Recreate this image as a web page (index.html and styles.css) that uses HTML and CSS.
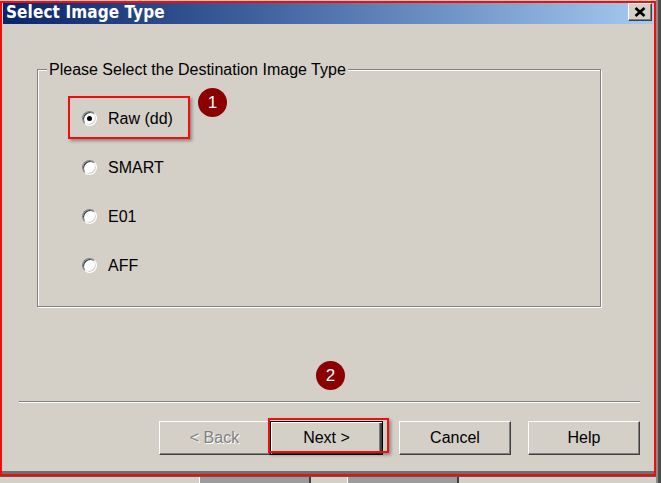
FILE: index.html
```html
<!DOCTYPE html>
<html>
<head>
<meta charset="utf-8">
<link rel="stylesheet" href="styles.css">
</head>
<body>
<div class="screen">
  <div class="left">
    <div class="dialog">
      <div class="titlebar">
        <span class="title">Select Image Type</span>
        <div class="close">
          <svg width="12" height="10" viewBox="0 0 12 10"><path d="M1.5 1 L10.5 9 M10.5 1 L1.5 9" stroke="#000" stroke-width="2.6" fill="none"/></svg>
        </div>
      </div>
      <div class="group">
        <span class="legend">Please Select the Destination Image Type</span>
        <div class="options">
          <label class="opt"><span class="radio checked"></span><span>Raw (dd)</span></label>
          <label class="opt"><span class="radio"></span><span>SMART</span></label>
          <label class="opt"><span class="radio"></span><span>E01</span></label>
          <label class="opt"><span class="radio"></span><span>AFF</span></label>
        </div>
      </div>
      <div class="sep"></div>
      <div class="buttons">
        <div class="btn back disabled">&lt; Back</div>
        <div class="btn next default">Next &gt;</div>
        <div class="btn cancel">Cancel</div>
        <div class="btn help">Help</div>
      </div>
      <div class="hl hl-raw"></div>
      <div class="hl hl-next"></div>
      <div class="badge badge-1">1</div>
      <div class="badge badge-2">2</div>
    </div>
    <div class="under">
      <div class="ub"></div>
      <div class="ub ub2"></div>
    </div>
  </div>
  <div class="edge"></div>
</div>
</body>
</html>
```
FILE: styles.css
```css
* { box-sizing: border-box; }
html, body { margin: 0; padding: 0; }
body {
  font-family: "Liberation Sans", Arial, sans-serif;
  font-size: 16px;
  color: #000;
  background: #d4d0c8;
}
.screen {
  width: 661px;
  height: 483px;
  display: flex;
  background: #d4d0c8;
  overflow: hidden;
}
.left {
  width: 656px;
  display: flex;
  flex-direction: column;
  padding-top: 1px;
}
.dialog {
  position: relative;
  height: 475px;
  border: 2px solid #f20c0c;
  background: #d4d0c8;
  box-shadow: inset 0 -3px 0 #6f6f6f;
  display: flex;
  flex-direction: column;
}
.titlebar {
  height: 21px;
  margin: 0 1px 0 1px;
  display: flex;
  align-items: flex-start;
  justify-content: space-between;
  background: linear-gradient(to right, #0a246a 0%, #3a5a98 35%, #7396c8 70%, #a6caf0 100%);
}
.title {
  font-family: "DejaVu Sans Condensed", "DejaVu Sans", sans-serif;
  font-stretch: condensed;
  font-weight: bold;
  font-size: 17px;
  line-height: 19px;
  color: #fff;
  padding-left: 3px;
  letter-spacing: 0.1px;
}
.close {
  width: 24px;
  height: 18px;
  margin-right: 1px;
  background: #d4d0c8;
  border: 1px solid;
  border-color: #fff #404040 #404040 #fff;
  box-shadow: inset -1px -1px 0 #808080;
  display: flex;
  align-items: center;
  justify-content: center;
  padding-bottom: 1px;
}
.close svg { display: block; }
.group {
  position: relative;
  margin: 45px 0 0 35px;
  width: 564px;
  height: 238px;
  border: 1px solid #808080;
  box-shadow: 1px 1px 0 #fff, inset 1px 1px 0 #fff;
}
.legend {
  position: absolute;
  top: -9px;
  left: 9px;
  padding: 0 2px;
  line-height: 18px;
  background: #d4d0c8;
  white-space: nowrap;
}
.options {
  display: flex;
  flex-direction: column;
  padding: 24px 0 0 44px;
}
.opt {
  height: 49px;
  display: flex;
  align-items: center;
  gap: 11px;
}
.radio {
  width: 15px;
  height: 15px;
  border-radius: 50%;
  border: 1px solid;
  border-color: #808080 #fff #fff #808080;
  background: #fff;
  box-shadow: inset 1px 1px 0 #404040, inset -1px -1px 0 #d4d0c8;
  display: flex;
  align-items: center;
  justify-content: center;
}
.radio.checked::after {
  content: "";
  width: 5px;
  height: 5px;
  border-radius: 50%;
  background: #000;
}
.sep {
  margin: 94px 0 0 17px;
  width: 621px;
  height: 2px;
  border-top: 1px solid #808080;
  border-bottom: 1px solid #fff;
}
.buttons {
  display: flex;
  margin-top: 18px;
  padding-left: 157px;
}
.btn {
  height: 34px;
  width: 112px;
  display: flex;
  align-items: center;
  justify-content: center;
  background: #d4d0c8;
  border: 1px solid;
  border-color: #fff #404040 #404040 #fff;
  box-shadow: inset -1px -1px 0 #808080;
}
.back { width: 111px; }
.next {
  width: 113px;
  margin-right: 16px;
  border: 1px solid #000;
  box-shadow: inset 1px 1px 0 #fff, inset -2px -2px 0 #404040, inset -3px -3px 0 #808080;
}
.cancel { margin-right: 17px; }
.disabled {
  color: #808080;
  text-shadow: 1px 1px 0 #fff;
}
.hl {
  position: absolute;
  border: 2px solid #f20c0c;
  box-shadow: 2px 2px 3px rgba(0,0,0,0.35);
}
.hl-raw { left: 66px; top: 93px; width: 122px; height: 43px; }
.hl-next { left: 266px; top: 415px; width: 121px; height: 35px; }
.badge {
  position: absolute;
  width: 29px;
  height: 29px;
  border-radius: 50%;
  background: #8b0000;
  color: #fff;
  font-size: 17px;
  line-height: 29px;
  text-align: center;
}
.badge-1 { left: 196px; top: 85px; }
.badge-2 { left: 314px; top: 358px; }
.under {
  flex: 1;
  display: flex;
  padding-left: 199px;
  gap: 36px;
  border-top: 1px solid #5a5a5a;
  background: #d4d0c8;
}
.ub {
  width: 112px;
  background: #9c9c9c;
  border-left: 1px solid #fff;
  border-right: 2px solid #404040;
}
.edge {
  width: 5px;
  background: linear-gradient(to right, #8a8a8a 2px, #4c4c4c 2px);
}
```
